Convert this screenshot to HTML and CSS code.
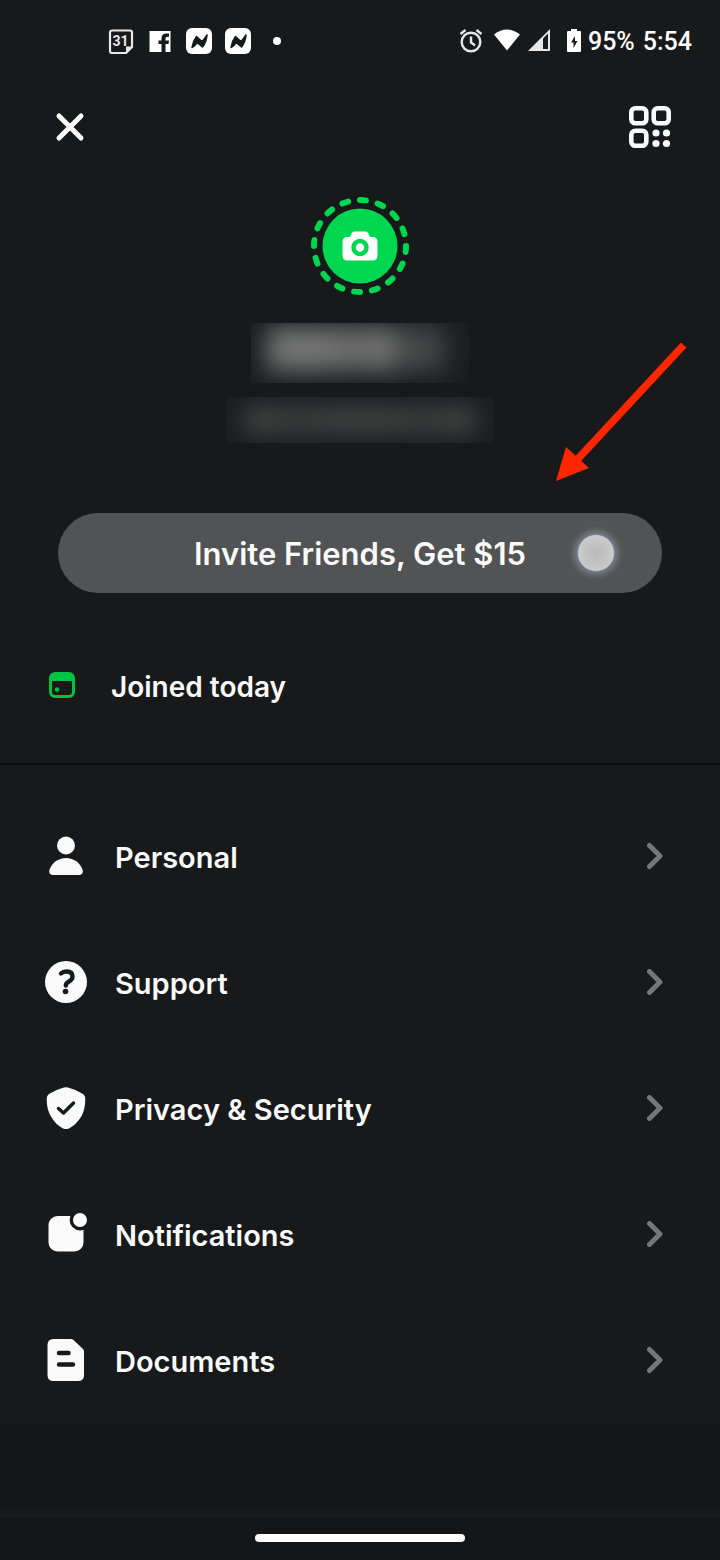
FILE: index.html
```html
<!DOCTYPE html>
<html lang="en">
  <head>
    <meta charset="utf-8">
    <meta name="viewport" content="width=device-width, initial-scale=1">
    <title>Account</title>
    <link rel="stylesheet" href="styles.css">
  </head>

  <body>
    <div class="status-bar">
      <div class="status-left">
        <svg width="26" height="26" viewBox="0 0 26 26">
          <path d="M4 2.500h18a2 2 0 0 1 2 2v14.500l-6 6H4a2 2 0 0 1-2-2V4.500a2 2 0 0 1 2-2z" fill="none" stroke="#e8e8e8" stroke-width="2.200"/>
          <path d="M24 18.500h-6V25z" fill="#e8e8e8"/>
          <text x="12.500" y="18" class="cal-day">31</text>
        </svg>
        <svg width="26" height="26" viewBox="0 0 26 26">
          <path d="M2.500 3h21v21h-5v-8h3l.5-3.500h-3.500v-2q0-1.800 2-1.800H22V5.500h-2.500q-5 0-5 5v2H11.500V16h3v8h-12z" fill="#fff"/>
        </svg>
        <svg width="26" height="26" viewBox="0 0 26 26">
          <rect width="26" height="26" rx="6" fill="#fff"/>
          <path d="M6 19.500Q7 13 10.500 8.500l5.500 5Q18.500 11 21 7q-.5 7-4.500 12L11 14.500Q9.500 18 6 19.500z" fill="#18191b" stroke="#18191b" stroke-width="1.500" stroke-linejoin="round"/>
        </svg>
        <svg width="26" height="26" viewBox="0 0 26 26">
          <rect width="26" height="26" rx="6" fill="#fff"/>
          <path d="M6 19.500Q7 13 10.500 8.500l5.500 5Q18.500 11 21 7q-.5 7-4.500 12L11 14.500Q9.500 18 6 19.500z" fill="#18191b" stroke="#18191b" stroke-width="1.500" stroke-linejoin="round"/>
        </svg>
        <svg width="26" height="26" viewBox="0 0 26 26">
          <circle cx="13" cy="13" r="4" fill="#fff"/>
        </svg>
      </div>
      <div class="status-right">
        <div class="status-icons">
          <!-- alarm -->
          <svg width="30" height="26" viewBox="0 0 30 26" fill="none" stroke="#e8e8e8" stroke-width="2.400">
            <circle cx="15" cy="14" r="9.300"/>
            <path d="M15 8.500v6l4 3M4.500 6l5-4M25.500 6l-5-4"/>
          </svg>
          <!-- wifi -->
          <svg width="30" height="26" viewBox="0 0 30 26">
            <path d="M4 6.500Q17 -3.500 30 6.500L17 22.500z" fill="#fff"/>
          </svg>
          <!-- signal -->
          <svg width="30" height="26" viewBox="0 0 30 26">
            <path d="M4 23L26 1v22z" fill="#e8e8e8"/>
            <path d="M19 10.500L24 5.500V21h-5z" fill="#18191b"/>
          </svg>
          <!-- battery -->
          <svg width="30" height="26" viewBox="0 0 30 26">
            <path d="M13 1h6v2h3q1 0 1 1v19q0 1-1 1H10q-1 0-1-1V4q0-1 1-1h3z" fill="#fff"/>
            <path d="M17 8l-4 6.500h2.500V20l4-7H17z" fill="#18191b"/>
          </svg>
        </div>
        <span>95%</span>
        <span class="clock">5:54</span>
      </div>
    </div>

    <header class="top-bar">
      <button class="icon-button" type="button" aria-label="Close">
        <svg width="42" height="42" viewBox="0 0 42 42">
          <path d="M10 10l22 22M32 10L10 32" stroke="#fff" stroke-width="5" stroke-linecap="round"/>
        </svg>
      </button>
      <button class="icon-button" type="button" aria-label="QR code">
        <svg width="42" height="42" viewBox="0 0 42 42" fill="none" stroke="#fafafa" stroke-width="4.600">
          <rect x="2.300" y="2.300" width="15" height="15" rx="4"/>
          <rect x="24.700" y="2.300" width="15" height="15" rx="4"/>
          <rect x="2.300" y="24.700" width="15" height="15" rx="4"/>
          <g fill="#fafafa" stroke="none">
            <circle cx="27" cy="27" r="3.600"/>
            <circle cx="37.500" cy="27" r="3.600"/>
            <circle cx="27" cy="37.500" r="3.600"/>
            <circle cx="37.500" cy="37.500" r="3.600"/>
          </g>
        </svg>
      </button>
    </header>

    <main>
      <section class="profile">
        <button class="avatar" type="button" aria-label="Add photo">
          <svg width="98" height="98" viewBox="0 0 98 98">
            <circle class="avatar-ring" cx="49" cy="49" r="46" pathLength="288" transform="rotate(-90 49 49)"/>
            <circle cx="49" cy="49" r="37.500" fill="#00d64f"/>
            <path d="M43.500 34.500h11q2 0 3 2l1.500 3.500h2.500q5 0 5 5v13.500q0 5-5 5h-25q-5 0-5-5V45q0-5 5-5H39l1.500-3.500q1-2 3-2z" fill="#fff"/>
            <circle cx="49" cy="50.500" r="6.500" fill="#fff" stroke="#00d64f" stroke-width="4.500"/>
          </svg>
        </button>
        <div class="redacted redacted-name"></div>
        <div class="redacted redacted-tag"></div>
        <div class="invite-wrap">
          <button class="invite" type="button">Invite Friends, Get $15</button>
          <span class="touch-dot"></span>
          <svg class="arrow" width="132" height="140" viewBox="0 0 132 140" fill="#ff2600">
            <path d="M125 2l5 4.500L24.500 120l-5-4.500z" stroke="#ff2600"/>
            <path d="M0 140L10 106l23 21z"/>
          </svg>
        </div>
      </section>

      <p class="joined">
        <svg width="26" height="26" viewBox="0 0 26 26">
          <rect x="1.500" y="1.500" width="23" height="23" rx="4.500" fill="none" stroke="#00c244" stroke-width="3"/>
          <path d="M1 9V6q0-5 5-5h14q5 0 5 5v3z" fill="#00c244"/>
          <circle cx="8" cy="17.500" r="2.300" fill="#00c244"/>
        </svg>
        <span class="label">Joined today</span>
      </p>

      <nav class="menu">
        <a class="menu-item" href="#">
          <svg width="42" height="42" viewBox="0 0 42 42" fill="#fafafa">
            <circle cx="21" cy="10.500" r="9"/>
            <path d="M21 23c8 0 14 5 16.500 11.500 1 3-.500 5.500-3.500 5.500H8c-3 0-4.500-2.500-3.500-5.500C7 28 13 23 21 23z"/>
          </svg>
          <span class="label">Personal</span>
          <svg class="chevron" width="16" height="26" viewBox="0 0 16 26"><path d="M2.500 2.500L13 13 2.500 23.500"/></svg>
        </a>
        <a class="menu-item" href="#">
          <svg width="42" height="42" viewBox="0 0 42 42">
            <circle cx="21" cy="21" r="21" fill="#fafafa"/>
            <path d="M16 12.500q2-2 5.500-2 6 0 6 5 0 3-3.500 5-3 1.500-3.200 4" fill="none" stroke="#18191b" stroke-width="4.400" stroke-linecap="round"/>
            <circle cx="20.500" cy="30.500" r="2.800" fill="#18191b"/>
          </svg>
          <span class="label">Support</span>
          <svg class="chevron" width="16" height="26" viewBox="0 0 16 26"><path d="M2.500 2.500L13 13 2.500 23.500"/></svg>
        </a>
        <a class="menu-item" href="#">
          <svg width="42" height="42" viewBox="0 0 42 42">
            <path d="M19 .500q2-.700 4 0Q31 2.500 38 7q2.300 1.500 2.300 4.500 0 11-4 18-5 8-12.300 12-3 1.200-6 0-7.500-4-12-12-4.500-7.500-4.300-18Q1.700 8.500 4 7q7-4.500 15-6.500z" fill="#fafafa"/>
            <path d="M13.500 21.500l5 4.500L28.500 16" fill="none" stroke="#18191b" stroke-width="3.500" stroke-linecap="round" stroke-linejoin="round"/>
          </svg>
          <span class="label">Privacy &amp; Security</span>
          <svg class="chevron" width="16" height="26" viewBox="0 0 16 26"><path d="M2.500 2.500L13 13 2.500 23.500"/></svg>
        </a>
        <a class="menu-item" href="#">
          <svg width="42" height="42" viewBox="0 0 42 42">
            <rect x="3.500" y="3" width="35" height="35.500" rx="9" fill="#fafafa"/>
            <circle cx="35" cy="7" r="8.700" fill="#fafafa" stroke="#18191b" stroke-width="3.400"/>
          </svg>
          <span class="label">Notifications</span>
          <svg class="chevron" width="16" height="26" viewBox="0 0 16 26"><path d="M2.500 2.500L13 13 2.500 23.500"/></svg>
        </a>
        <a class="menu-item" href="#">
          <svg width="42" height="42" viewBox="0 0 42 42">
            <path d="M8.500 0H26q1.500 0 2.500 1l9.500 9q1 1 1 2.500V36q0 6-6 6H8.500q-6 0-6-6V6q0-6 6-6z" fill="#fafafa"/>
            <path d="M14 14h9.500M14 25.500h14" stroke="#18191b" stroke-width="4.500" stroke-linecap="round"/>
          </svg>
          <span class="label">Documents</span>
          <svg class="chevron" width="16" height="26" viewBox="0 0 16 26"><path d="M2.500 2.500L13 13 2.500 23.500"/></svg>
        </a>
      </nav>
    </main>

    <div class="footer-band"></div>
    <div class="home-bar">
      <div class="home-pill"></div>
    </div>
  </body>
</html>
```
FILE: styles.css
```css
* {
  box-sizing: border-box;
}

body {
  display: flex;
  flex-direction: column;
  min-height: 100vh;
  margin: 0;
  background-color: #18191b;
  color: #fafafa;
  font-family: Inter, "Liberation Sans", sans-serif;
  font-size: 28px;
  font-weight: 600;
}

svg {
  display: block;
  flex-shrink: 0;
}

button {
  border: none;
  padding: 0;
  background: none;
  color: inherit;
  font: inherit;
  cursor: pointer;
}

/* status bar */
.status-bar {
  display: flex;
  justify-content: space-between;
  align-items: center;
  height: 82px;
  padding: 0 28px 0 108px;
}

.status-left {
  display: flex;
  gap: 13px;
}

.status-right {
  display: flex;
  align-items: center;
  font-family: Roboto, sans-serif;
  font-size: 25px;
  font-weight: 500;
  color: #fff;
}

.status-icons {
  display: flex;
  gap: 4px;
}

.clock {
  margin-left: 8px;
}

.cal-day {
  fill: #e8e8e8;
  font-family: Roboto, sans-serif;
  font-size: 14px;
  font-weight: 700;
  text-anchor: middle;
}

/* header */
.top-bar {
  display: flex;
  justify-content: space-between;
  align-items: center;
  height: 90px;
  padding: 0 49px;
}

/* profile */
.profile {
  display: flex;
  flex-direction: column;
  align-items: center;
  padding: 25px 58px 0;
}

.avatar-ring {
  fill: none;
  stroke: #00d64f;
  stroke-width: 6;
  stroke-linecap: round;
  stroke-dasharray: 6 12;
}

.redacted {
  position: relative;
  overflow: hidden;
  background-color: #1c1d1f;
}

/* smeared text inside the box */
.redacted::before {
  content: '';
  position: absolute;
  inset: 10px 18px;
  filter: blur(12px);
}

.redacted-name {
  width: 218px;
  height: 60px;
  margin-top: 28px;
}

.redacted-name::before {
  inset: 4px 24px 12px 16px;
  background: linear-gradient(to right, #747574 0%, #747574 30%, #686968 50%, #747574 68%, #404141 78%, #4c4d4d 90%, #3c3d3d 100%);
}

.redacted-tag {
  width: 266px;
  height: 46px;
  margin-top: 14px;
}

.redacted-tag::before {
  background: linear-gradient(to right, #4a4c4a 0%, #3c3e3d 20%, #434544 45%, #434443 60%, #3c3e3d 80%, #4a4c4a 100%);
}

.invite-wrap {
  position: relative;
  align-self: stretch;
  margin-top: 70px;
}

.invite {
  width: 100%;
  height: 80px;
  border-radius: 40px;
  background-color: #525355;
  font-size: 31px;
}

.touch-dot {
  position: absolute;
  top: 21px;
  right: 47px;
  width: 38px;
  height: 38px;
  border: 1px solid #8486b0;
  border-radius: 50%;
  background: radial-gradient(circle, #b9b9b9, #d2d2d2);
  box-shadow: 0 0 6px 3px #818286;
  pointer-events: none;
}

.arrow {
  position: absolute;
  right: -26px;
  bottom: 112px;
  pointer-events: none;
}

.joined {
  display: flex;
  align-items: center;
  gap: 36px;
  height: 172px;
  margin: 0;
  padding: 14px 49px 0;
  border-bottom: 2px solid #0b0c0d;
}

.label {
  padding-top: 3px;
}

/* menu */
.menu {
  padding-top: 28px;
  font-size: 29px;
}

.menu-item {
  display: flex;
  align-items: center;
  gap: 28px;
  height: 126px;
  padding: 0 57px 0 45px;
  color: inherit;
  text-decoration: none;
}

.chevron {
  margin-left: auto;
  fill: none;
  stroke: #757678;
  stroke-width: 5;
  stroke-linecap: round;
  stroke-linejoin: round;
}

/* bottom of the screen */
.footer-band {
  flex: 1;
  min-height: 84px;
  border-bottom: 11px solid #18191b;
  background-color: #141517;
}

.home-bar {
  display: flex;
  justify-content: center;
  padding: 16px 0 18px;
  background-color: #141517;
}

.home-pill {
  width: 210px;
  height: 8px;
  border-radius: 4px;
  background-color: #fff;
}
```
